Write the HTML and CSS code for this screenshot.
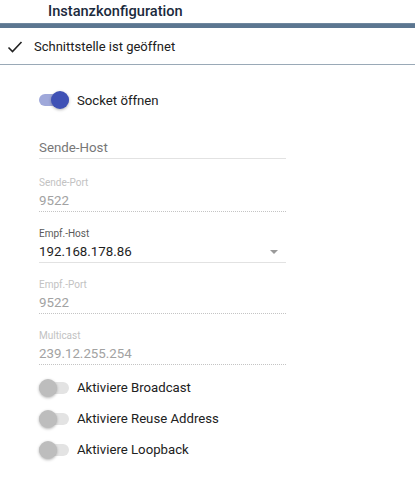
FILE: index.html
```html
<!DOCTYPE html>
<html>
<head>
<meta charset="utf-8">
<title>Instanzkonfiguration</title>
<link rel="stylesheet" href="styles.css">
</head>
<body>
    <!-- Kopfzeile -->
    <div class="head">
        <div class="head-title">Instanzkonfiguration</div>
        <div class="head-bar"></div>
        <div class="status">
            <svg class="check" width="16" height="14" viewBox="0 0 16 14"><path d="M1.5 7.5 L5.5 11.5 L14.5 2" fill="none" stroke="#222" stroke-width="1.6"/></svg>
            <span>Schnittstelle ist geöffnet</span>
        </div>
    </div>

    <!-- Formular -->
    <div class="form">
        <div class="switch-row first">
            <span class="switch on"><span class="knob"></span></span>
            <span class="switch-text">Socket öffnen</span>
        </div>

        <div class="field host">
            <div class="label"></div>
            <div class="value placeholder">Sende-Host</div>
        </div>

        <div class="field disabled port">
            <div class="label">Sende-Port</div>
            <div class="value">9522</div>
        </div>

        <div class="field">
            <div class="label">Empf.-Host</div>
            <div class="value select">192.168.178.86<span class="arrow"></span></div>
        </div>

        <div class="field disabled">
            <div class="label">Empf.-Port</div>
            <div class="value">9522</div>
        </div>

        <div class="field disabled">
            <div class="label">Multicast</div>
            <div class="value">239.12.255.254</div>
        </div>

        <div class="switch-row">
            <span class="switch"><span class="knob"></span></span>
            <span class="switch-text">Aktiviere Broadcast</span>
        </div>
        <div class="switch-row">
            <span class="switch"><span class="knob"></span></span>
            <span class="switch-text">Aktiviere Reuse Address</span>
        </div>
        <div class="switch-row">
            <span class="switch"><span class="knob"></span></span>
            <span class="switch-text">Aktiviere Loopback</span>
        </div>
    </div>
</body>
</html>
```

FILE: styles.css
```css
* {
    margin: 0;
    padding: 0;
    box-sizing: border-box;
}
body {
    font-family: Roboto, "Liberation Sans", sans-serif;
    background: #fff;
    color: #212121;
}
/* Kopfzeile */
.head-title {
    height: 23px;
    line-height: 23px;
    padding-left: 48px;
    font-size: 14.6px;
    font-weight: 500;
    color: #1b2a3c;
}
.head-bar {
    height: 5px;
    background: #5c7690;
    border-top: 1px solid #6f879e;
}
.status {
    height: 37px;
    display: flex;
    align-items: center;
    padding-left: 7px;
    border-bottom: 1px solid #9aa9b7;
    font-size: 13px;
    color: #202020;
}
.check {
    margin-right: 11px;
    margin-top: 1px;
}
/* Formular */
.form {
    padding-left: 39px;
    width: 286px;
}
.switch-row {
    height: 31px;
    display: flex;
    align-items: center;
    font-size: 13.2px;
    color: #212121;
}
.switch-row.first {
    height: 32px;
    margin-top: 19px;
}
.switch {
    position: relative;
    width: 30px;
    height: 12px;
    border-radius: 6px;
    background: #e3e3e3;
    margin-right: 8px;
}
.switch .knob {
    position: absolute;
    left: 0;
    top: -3px;
    width: 18px;
    height: 18px;
    border-radius: 50%;
    background: #bdbdbd;
    box-shadow: 0 1px 3px rgba(0, 0, 0, 0.3);
}
.switch.on {
    background: #9fa8da;
}
.switch.on .knob {
    left: 12px;
    background: #3f51b5;
}
.field {
    margin-top: 15px;
    border-bottom: 1px solid #e2e2e2;
}
.field.host {
    margin-top: 7px;
}
.field.port {
    margin-top: 17px;
}
.field.disabled {
    border-bottom: 1px dotted #c4c4c4;
}
.label {
    height: 14px;
    line-height: 14px;
    font-size: 10px;
    color: #5a5a5a;
}
.value {
    height: 21px;
    line-height: 21px;
    font-size: 13.3px;
    color: #1e1e1e;
}
.value.placeholder {
    color: #777;
}
.disabled .label {
    color: #c2c2c2;
}
.disabled .value {
    color: #a2a2a2;
}
.select {
    display: flex;
    justify-content: space-between;
    align-items: center;
}
.arrow {
    width: 0;
    height: 0;
    border-left: 4px solid transparent;
    border-right: 4px solid transparent;
    border-top: 4px solid #9a9a9a;
    margin-right: 8px;
    margin-top: 1px;
}
.field + .switch-row {
    margin-top: 7px;
}
```
